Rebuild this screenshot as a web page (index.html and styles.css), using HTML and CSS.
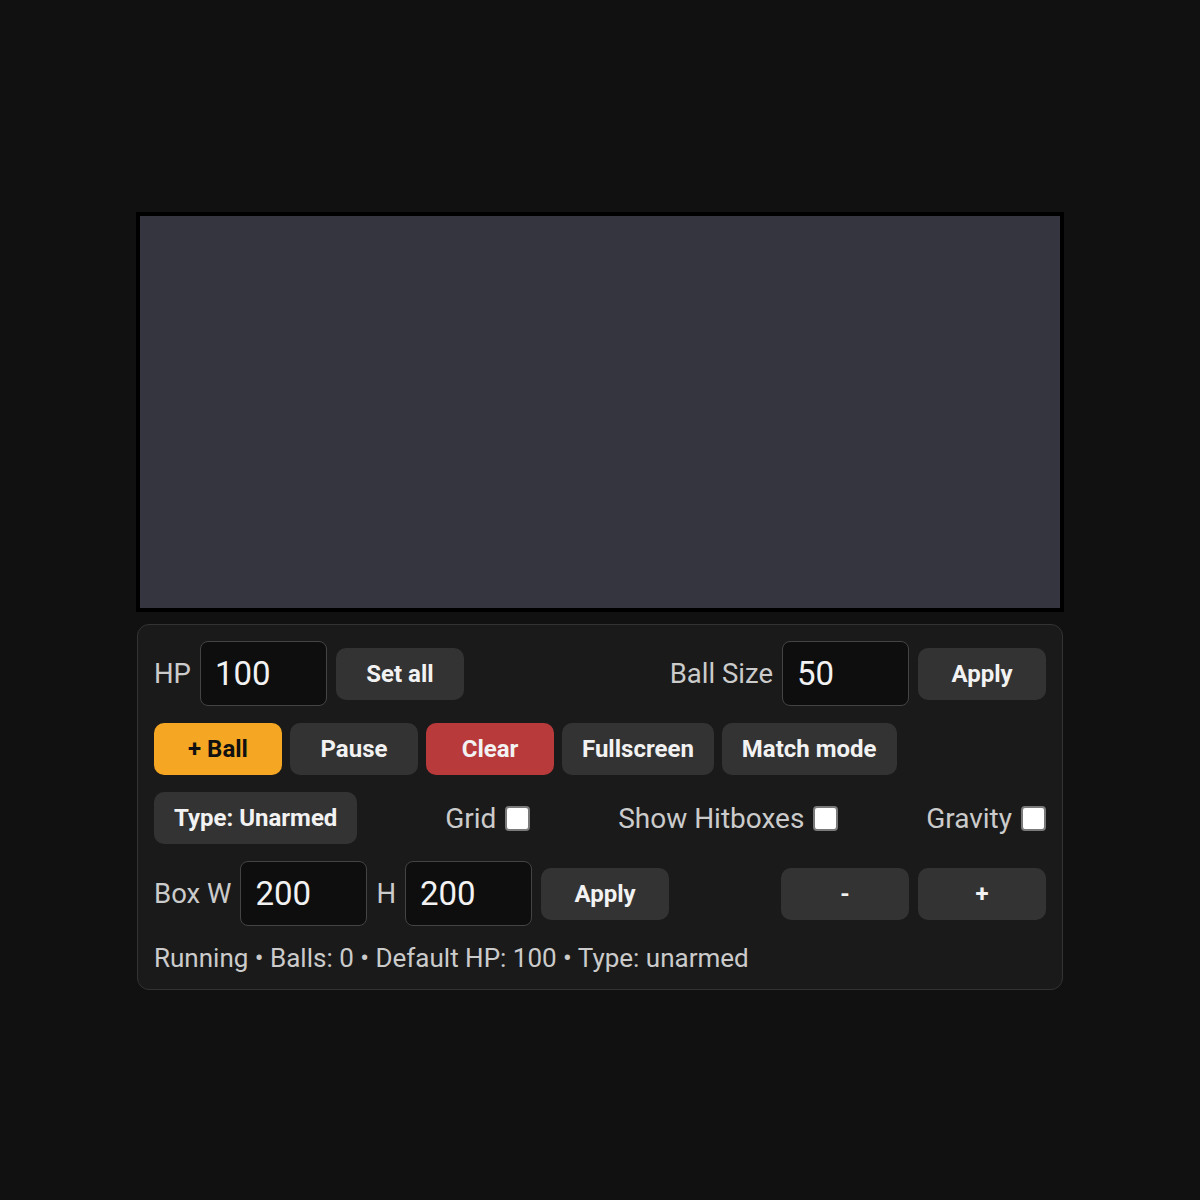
FILE: index.html
```html
<!DOCTYPE html>
<html lang="en">
<head>
    <meta charset="UTF-8">
    <meta name="viewport" content="width=device-width, initial-scale=1.0">
    <title>Ball Arena</title>
    <link rel="stylesheet" href="styles.css">
</head>
<body>
    <main class="wrap">
        <!-- Arena -->
        <div class="arena"></div>

        <!-- Controls -->
        <div class="panel">
            <div class="row">
                <div class="group">
                    <label class="lbl" for="hp">HP</label>
                    <input class="num" id="hp" type="text" value="100">
                    <button class="btn">Set all</button>
                </div>
                <div class="group">
                    <label class="lbl" for="size">Ball Size</label>
                    <input class="num" id="size" type="text" value="50">
                    <button class="btn">Apply</button>
                </div>
            </div>

            <div class="row row-start">
                <button class="btn btn-yellow">+ Ball</button>
                <button class="btn">Pause</button>
                <button class="btn btn-red">Clear</button>
                <button class="btn">Fullscreen</button>
                <button class="btn">Match mode</button>
            </div>

            <div class="row">
                <button class="btn">Type: Unarmed</button>
                <label class="check">Grid <input type="checkbox"></label>
                <label class="check">Show Hitboxes <input type="checkbox"></label>
                <label class="check">Gravity <input type="checkbox"></label>
            </div>

            <div class="row">
                <div class="group">
                    <label class="lbl" for="boxw">Box W</label>
                    <input class="num" id="boxw" type="text" value="200">
                    <label class="lbl" for="boxh">H</label>
                    <input class="num" id="boxh" type="text" value="200">
                    <button class="btn">Apply</button>
                </div>
                <div class="group">
                    <button class="btn">-</button>
                    <button class="btn">+</button>
                </div>
            </div>

            <div class="status">Running &bull; Balls: 0 &bull; Default HP: 100 &bull; Type: unarmed</div>
        </div>
    </main>
</body>
</html>
```

FILE: styles.css
```css
/* General */
body {
    margin: 0;
    padding: 0;
    background-color: #111111;
    font-family: Roboto, "Noto Sans", sans-serif;
    color: #cfcfcf;
}
.wrap {
    width: 928px;
    min-height: 1200px;
    box-sizing: border-box;
    padding-top: 2px;
    margin: 0 auto;
    display: flex;
    flex-direction: column;
    justify-content: center;
    gap: 12px;
}

/* Arena */
.arena {
    height: 392px;
    border: 4px solid #000;
    background-color: #35353f;
}

/* Panel */
.panel {
    margin: 0 1px;
    padding: 16px;
    border: 1px solid #333;
    border-radius: 12px;
    background-color: #1a1a1a;
    display: flex;
    flex-direction: column;
    gap: 17px;
}
.row {
    display: flex;
    align-items: center;
    justify-content: space-between;
}
.row-start {
    justify-content: flex-start;
    gap: 8px;
}
.group {
    display: flex;
    align-items: center;
    gap: 9px;
}
.lbl {
    font-size: 27.5px;
    color: #cbcbcb;
}
.check {
    font-size: 28px;
    color: #cbcbcb;
    display: flex;
    align-items: center;
    gap: 9px;
}
.check input {
    appearance: none;
    width: 25px;
    height: 25px;
    margin: 0;
    border: 2px solid #7a7a7a;
    border-radius: 4px;
    background-color: #fff;
}
.num {
    width: 127px;
    height: 65px;
    box-sizing: border-box;
    padding: 0 14px;
    border: 1px solid #444;
    border-radius: 8px;
    background-color: #0e0e0e;
    color: #f2f2f2;
    font-family: inherit;
    font-size: 33px;
}
.btn {
    min-width: 128px;
    height: 52px;
    padding: 0 20px;
    border: none;
    border-radius: 10px;
    background-color: #333333;
    color: #f2f2f2;
    font-family: inherit;
    font-size: 24px;
    font-weight: bold;
}
.btn-yellow {
    background-color: #f5a623;
    color: #111;
}
.btn-red {
    background-color: #b83a3b;
}
.status {
    font-size: 26px;
    line-height: 30px;
    color: #cbcbcb;
}
```
